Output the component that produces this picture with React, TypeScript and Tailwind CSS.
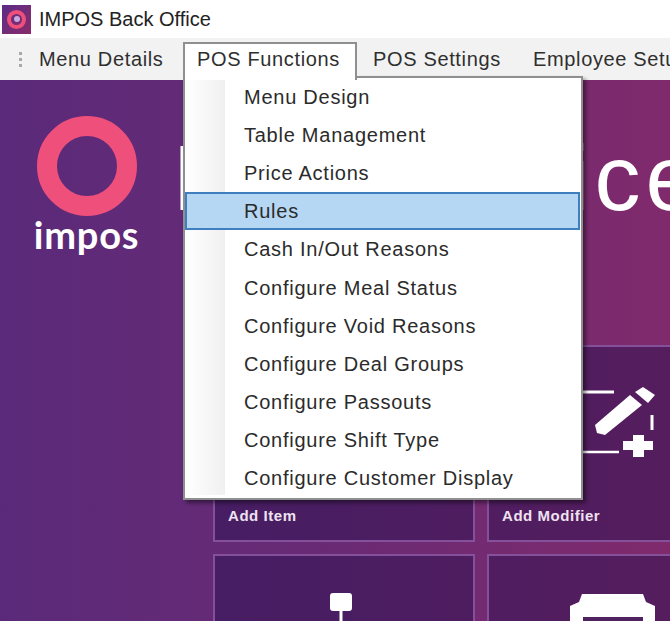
const font = "font-['Liberation_Sans',Arial,sans-serif]";

const menuItems = [
  "Menu Design",
  "Table Management",
  "Price Actions",
  "Rules",
  "Cash In/Out Reasons",
  "Configure Meal Status",
  "Configure Void Reasons",
  "Configure Deal Groups",
  "Configure Passouts",
  "Configure Shift Type",
  "Configure Customer Display",
];

const AppIcon = () => (
  <div className="w-[29px] h-[29px] bg-gradient-to-br from-[#5b2a86] to-[#8a2a6a] flex items-center justify-center">
    <div className="w-[19px] h-[19px] rounded-full border-[4px] border-[#ef4f7b] flex items-center justify-center">
      <div className="w-[6px] h-[6px] rounded-full bg-[#c9a8dc]"></div>
    </div>
  </div>
);

const Dropdown = () => (
  <div className="absolute left-[183px] top-[76px] w-[400px] h-[424px] bg-white border-2 border-[#8f8f8f] shadow-[3px_3px_4px_rgba(0,0,0,0.45)] z-10">
    {/* tab joins the menu */}
    <div className="absolute left-0 -top-[2px] w-[172px] h-[2px] bg-white"></div>
    <div className="absolute left-0 top-0 bottom-[3px] w-[40px] bg-gradient-to-r from-white to-[#f0f0f0]"></div>
    <div className="relative flex flex-col">
      {menuItems.map((item) => (
        <div
          key={item}
          className={`h-[38.1px] w-[395px] flex items-center pl-[59px] text-[20px] tracking-[0.75px] text-[#2b2b2b] ${
            item === "Rules" ? "bg-[#b5d7f3] border-2 border-[#3f7fc0]" : ""
          }`}
        >
          <span className={item === "Rules" ? "-ml-[2px]" : ""}>{item}</span>
        </div>
      ))}
    </div>
  </div>
);

const Tile = ({ label, children }: { label?: string; children?: React.ReactNode }) => (
  <div className="relative h-[197px] border-2 border-[#84509a] bg-[#2a1050]/50">
    {children}
    {label && (
      <div className="absolute left-[13px] bottom-[13px] text-[15px] font-bold tracking-[0.55px] text-[#eee2f0]">{label}</div>
    )}
  </div>
);

const App = () => {
  return (
    <div className={`relative w-[670px] h-[621px] overflow-hidden bg-white ${font}`}>
      {/* title bar */}
      <div className="h-[38px] flex items-center gap-[8px] pl-[2px] bg-white">
        <AppIcon />
        <span className="text-[20px] text-[#222]">IMPOS Back Office</span>
      </div>

      {/* menu strip */}
      <div className="h-[42px] bg-[#f2f2f2] flex items-end text-[20px] tracking-[0.65px] text-[#2f2f2f] whitespace-nowrap">
        <div className="h-[38px] w-[39px] shrink-0 flex flex-col items-center justify-center gap-[3px] pl-[2px] pb-[4px]">
          <div className="w-[3px] h-[3px] bg-[#a8a8a8]"></div>
          <div className="w-[3px] h-[3px] bg-[#a8a8a8]"></div>
          <div className="w-[3px] h-[3px] bg-[#a8a8a8]"></div>
        </div>
        <div className="w-[144px] shrink-0 h-[38px] pt-[2px]">Menu Details</div>
        <div className="w-[174px] shrink-0 h-[38px] pl-[12px] bg-white border-2 border-b-0 border-[#8f8f8f] z-20">POS Functions</div>
        <div className="w-[176px] shrink-0 h-[38px] pt-[2px] pl-[16px]">POS Settings</div>
        <div className="h-[38px] shrink-0 pt-[2px]">Employee Setup</div>
      </div>

      {/* back office home */}
      <div className="h-[541px] flex bg-gradient-to-r from-[#5a2a7a] via-[#6a2a74] to-[#802a6c]">
        <div className="w-[213px] shrink-0 flex flex-col items-center pr-[40px] pt-[36px]">
          <svg width="100" height="100" viewBox="0 0 100 100" className="shrink-0">
            <circle cx="50" cy="50" r="40" fill="none" stroke="#ef4f7b" strokeWidth="20" />
          </svg>
          <div className="-mt-[4px] font-['Lato',sans-serif] font-bold text-[38px] leading-[44px] tracking-[0.8px] text-white">impos</div>
        </div>
        <div className="flex-1 flex flex-col min-w-0">
          <div className="h-[265px] shrink-0 pt-[42px] -ml-[40px] whitespace-nowrap text-[92px] leading-[112px] tracking-[5px] [word-spacing:5px] text-white">Back Office</div>
          <div className="grid grid-cols-[262px_262px] gap-[12px] shrink-0">
            <Tile label="Add Item" />
            <Tile label="Add Modifier">
              <svg width="172" height="120" viewBox="489 347 172 120" className="absolute left-0 top-0" fill="none">
                <path d="M583 392H614M652 415V430" stroke="#fff" strokeWidth="3" />
                <path d="M583 452H619" stroke="#fff" strokeWidth="2.5" />
                <path d="M595 425 630 395 642 405 605 435 597 433Z" fill="#fff" />
                <path d="M635 392 643 387 655 395 648 403Z" fill="#fff" />
                <path d="M633 435H644V441H653V450H644V457H633V450H623V441H633Z" fill="#fff" />
              </svg>
            </Tile>
            <Tile>
              <svg width="24" height="30" viewBox="0 0 24 30" className="absolute left-[114px] top-[37px]">
                <rect x="1" y="0" width="22" height="18" rx="3" fill="#fff" />
                <rect x="10.5" y="18" width="3" height="12" fill="#fff" />
              </svg>
            </Tile>
            <Tile>
              <svg width="85" height="30" viewBox="0 0 85 30" className="absolute left-[81px] top-[38px]">
                <path d="M12 0H73L76 8 85 12V30H0V12L9 8Z" fill="#fff" />
                <rect x="13" y="23" width="60" height="7" fill="#4f2260" />
              </svg>
            </Tile>
          </div>
        </div>
      </div>

      <Dropdown />
    </div>
  );
};

export default App;
